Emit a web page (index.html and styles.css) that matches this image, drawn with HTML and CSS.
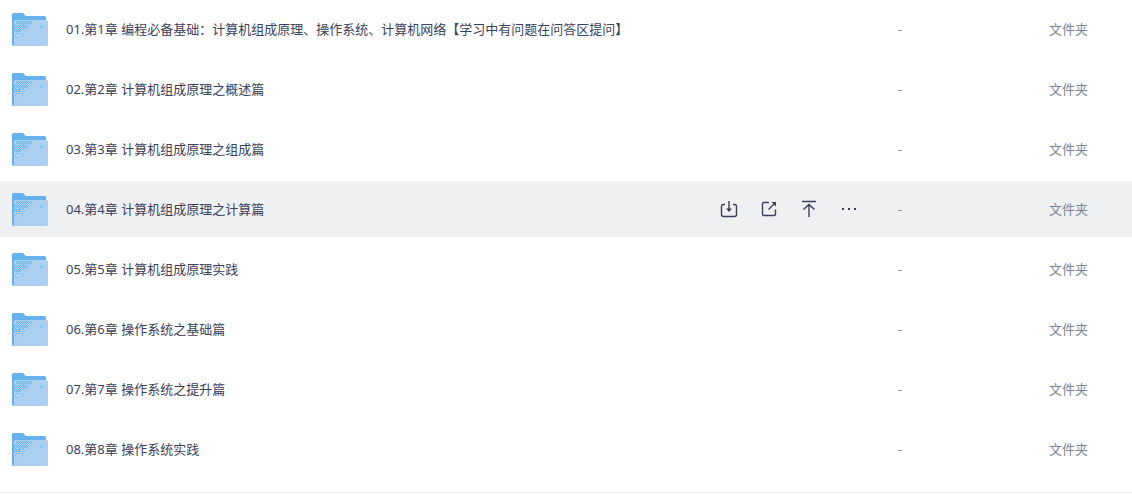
FILE: index.html
```html
<!DOCTYPE html>
<html lang="zh-CN">
<head>
<meta charset="utf-8">
<title>文件列表</title>
<link rel="stylesheet" href="styles.css">
</head>
<body>
<svg class="sprite" aria-hidden="true">
  <defs>
    <pattern id="dots" width="4" height="4" patternUnits="userSpaceOnUse">
      <path fill="#66b1ee" d="M0 0h1v1H0zM2 0h1v1H2zM1 1h1v1H1zM3 1h1v1H3zM0 2h1v1H0zM2 2h1v1H2zM3 3h1v1H3z"/>
    </pattern>
    <symbol id="folder" viewBox="0 0 36 33">
      <path fill="#66b1ee" d="M1 0h10l3 3h19l1 1v28H1l-1-1V1z"/>
      <path fill="#66b1ee" d="M0 28h4v5H1l-1-1z"/>
      <path fill="#abd0f1" d="M3 7h32l1 1v24l-1 1H2V8z"/>
      <path fill="url(#dots)" d="M4 8h16v2h-2v2h-2v3h-4v2H9v2H2v-8h2z"/>
      <path fill="#66b1ee" d="M21 8h1v1h-1zM19 10h1v1h-1zM18 12h1v1h-1zM16 15h1v1h-1zM13 17h1v1h-1zM4 20h1v1H4zM7 20h1v1H7zM10 20h1v1h-1zM3 22h1v1H3zM5 24h1v1H5zM10 22h1v1h-1zM28 14h1v1h-1zM30 14h1v1h-1zM28 12h1v1h-1zM30 12h1v1h-1z"/>
    </symbol>
  </defs>
</svg>
<main class="files">
  <table class="file-table">
    <colgroup><col><col class="col-actions"><col class="col-size"><col class="col-type"></colgroup>
    <tbody>
      <tr><td><a class="file" href="#1"><svg class="folder"><use href="#folder"/></svg>01.第1章 编程必备基础：计算机组成原理、操作系统、计算机网络【学习中有问题在问答区提问】</a></td><td></td><td>-</td><td>文件夹</td></tr>
      <tr><td><a class="file" href="#2"><svg class="folder"><use href="#folder"/></svg>02.第2章 计算机组成原理之概述篇</a></td><td></td><td>-</td><td>文件夹</td></tr>
      <tr><td><a class="file" href="#3"><svg class="folder"><use href="#folder"/></svg>03.第3章 计算机组成原理之组成篇</a></td><td></td><td>-</td><td>文件夹</td></tr>
      <tr class="active">
        <td><a class="file" href="#4"><svg class="folder"><use href="#folder"/></svg>04.第4章 计算机组成原理之计算篇</a></td>
        <td>
          <div class="actions">
            <button type="button" aria-label="下载"><svg viewBox="0 0 18 18"><path d="M5 4.5H3.500Q1.500 4.500 1.500 6.500V14.500Q1.500 16.500 3.500 16.500H14.500Q16.500 16.500 16.500 14.500V6.500Q16.500 4.500 14.500 4.500H13M9 1v9"/><path class="solid" d="M6 8.500h6L9 12z"/></svg></button>
            <button type="button" aria-label="分享"><svg viewBox="0 0 18 18"><path d="M9 2.500H4Q2.500 2.500 2.500 4V14Q2.500 15.500 4 15.500H14Q15.500 15.500 15.500 14V9.500M8.500 9.500L14 4"/><path class="solid" d="M11.500 2H16V6.500z"/></svg></button>
            <button type="button" aria-label="置顶"><svg viewBox="0 0 18 18"><path d="M2 1.500H16M9 17V5M3.500 9.500L9 4.500L14.500 9.500"/></svg></button>
            <button type="button" aria-label="更多"><svg viewBox="0 0 18 18"><path class="solid" d="M2 8h2v2H2zM8 8h2v2H8zM14 8h2v2h-2z"/></svg></button>
          </div>
        </td>
        <td>-</td><td>文件夹</td>
      </tr>
      <tr><td><a class="file" href="#5"><svg class="folder"><use href="#folder"/></svg>05.第5章 计算机组成原理实践</a></td><td></td><td>-</td><td>文件夹</td></tr>
      <tr><td><a class="file" href="#6"><svg class="folder"><use href="#folder"/></svg>06.第6章 操作系统之基础篇</a></td><td></td><td>-</td><td>文件夹</td></tr>
      <tr><td><a class="file" href="#7"><svg class="folder"><use href="#folder"/></svg>07.第7章 操作系统之提升篇</a></td><td></td><td>-</td><td>文件夹</td></tr>
      <tr><td><a class="file" href="#8"><svg class="folder"><use href="#folder"/></svg>08.第8章 操作系统实践</a></td><td></td><td>-</td><td>文件夹</td></tr>
    </tbody>
  </table>
</main>
</body>
</html>
```

FILE: styles.css
```css
* {
  box-sizing: border-box;
}

body {
  margin: 0;
  background: #fff;
  color: #3b415c;
  font: 13px/20px "Noto Sans", "Noto Sans CJK SC", sans-serif;
}

.sprite {
  position: absolute;
  width: 0;
  height: 0;
}

.files {
  padding: 1px 0 11px;
  border-bottom: 1px solid #eceef0;
}

.file-table {
  width: 100%;
  table-layout: fixed;
  border-spacing: 0;
}

.col-actions {
  width: 178px;
}

.col-size {
  width: 151px;
}

.col-type {
  width: 83px;
}

td {
  height: 60px;
  padding: 0;
  border-bottom: 4px solid transparent;
  background-clip: padding-box;
  color: #7d8399;
  white-space: nowrap;
  vertical-align: middle;
}

.active td {
  background-color: #eef0f2;
}

.file {
  display: flex;
  align-items: center;
  gap: 18px;
  padding-left: 12px;
  color: #3b415c;
  text-decoration: none;
}

.folder {
  flex: none;
  width: 36px;
  height: 33px;
}

.actions {
  display: flex;
  gap: 22px;
}

.actions button {
  width: 18px;
  height: 18px;
  padding: 0;
  border: 0;
  background: none;
  cursor: pointer;
}

.actions svg {
  display: block;
  width: 18px;
  height: 18px;
  fill: none;
  stroke: #3b3f58;
  stroke-width: 1.4;
}

.actions .solid {
  fill: #3b3f58;
  stroke: none;
}
```
